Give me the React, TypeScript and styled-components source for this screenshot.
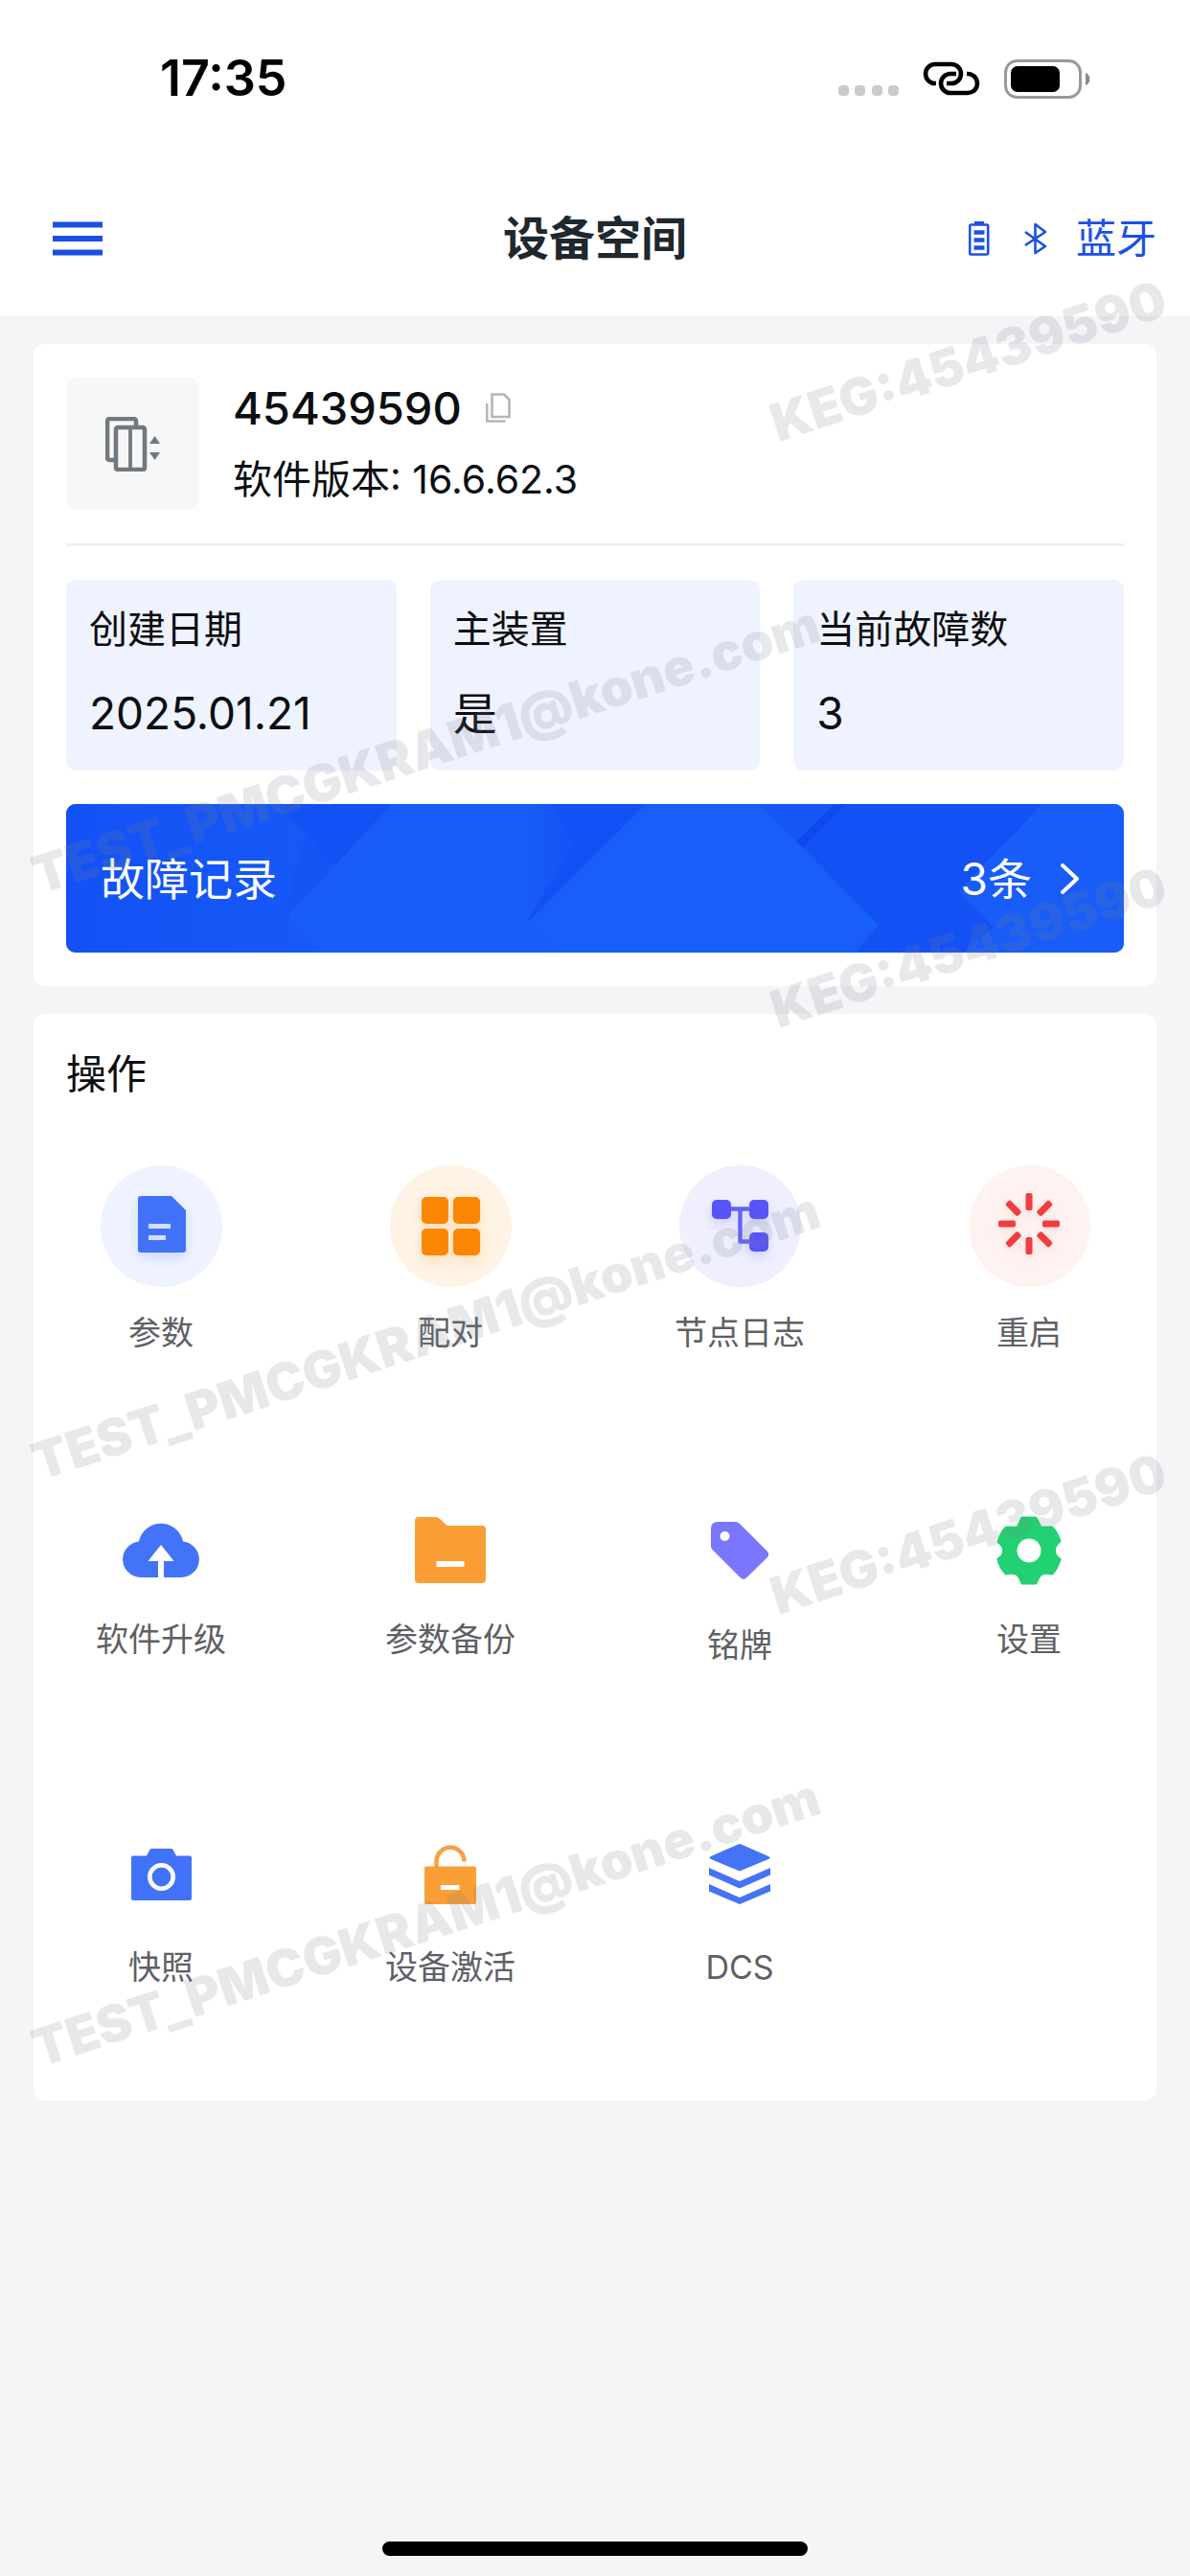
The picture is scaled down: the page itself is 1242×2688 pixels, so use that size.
// 库
import styled, { createGlobalStyle } from "styled-components";
import type { JSX } from "react";

// 类型
interface InfoInterface {
  label: string;
  value: string;
}

interface ActionInterface {
  name: string;
  icon: JSX.Element;
  labelGap: number;
  background?: string;
  shadow?: string;
}

// 数据
const infoList: InfoInterface[] = [
  { label: "创建日期", value: "2025.01.21" },
  { label: "主装置", value: "是" },
  { label: "当前故障数", value: "3" },
];

const watermarkRows = [0, 1, 2];

/**
 * @desc 顶部状态栏右侧的信号、热点和电量图标。
 */
function StatusIcons(): JSX.Element {
  return (
    <StatusIconsDiv>
      <svg width="63" height="38" viewBox="0 0 63 38" fill="#cbcbcb">
        <rect x="0" y="26" width="11" height="11" rx="4" />
        <rect x="17" y="26" width="11" height="11" rx="4" />
        <rect x="35" y="26" width="11" height="11" rx="4" />
        <rect x="52" y="26" width="11" height="11" rx="4" />
      </svg>
      <svg width="62" height="38" viewBox="0 0 62 38" fill="none" stroke="#000" strokeWidth="4.6">
        <path d="M15 24H14A10 10 0 0 1 14 4H31A10 10 0 0 1 31 24H26" />
        <path d="M36 14H30A10 10 0 0 0 30 34H48A10 10 0 0 0 48 14H47" />
      </svg>
      <svg width="90" height="41" viewBox="0 0 90 41">
        <rect x="1.5" y="1.5" width="78" height="38" rx="12" fill="none" stroke="#999" strokeWidth="3" />
        <rect x="7" y="7" width="51" height="27" rx="7" />
        <path d="M85 14a7 7 0 0 1 0 13z" fill="#8a8a8a" />
      </svg>
    </StatusIconsDiv>
  );
}

/** 电梯设备图标 */
function ElevatorIcon(): JSX.Element {
  return (
    <svg width="58" height="57" viewBox="0 0 58 57" fill="none" stroke="#71797e" strokeWidth="4.6">
      <path d="M9 45H4.5A2.5 2.5 0 0 1 2 42.5V4.5A2.5 2.5 0 0 1 4.5 2H29.5A2.5 2.5 0 0 1 32 4.5V9" />
      <rect x="11" y="11" width="30" height="44" rx="2" />
      <path d="M26 11V55" strokeWidth="3.8" />
      <path d="M46 28L51.5 20L57 28ZM46 37L51.5 45L57 37Z" fill="#71797e" stroke="none" />
    </svg>
  );
}

// 第一行图标以 127 的圆形底色为画布
const paramIcon = (
  <svg width="127" height="127" viewBox="0 0 127 127">
    <path d="M42 32H74L89 47V88a3 3 0 0 1-3 3H42a3 3 0 0 1-3-3V35a3 3 0 0 1 3-3z" fill="#4272f8" />
    <path d="M50 63.5H73M50 75.5H68" stroke="#d0deff" strokeWidth="5" />
  </svg>
);

const pairIcon = (
  <svg width="127" height="127" viewBox="0 0 127 127" fill="#fb8603">
    <rect x="33" y="33" width="28" height="28" rx="5" />
    <rect x="66" y="33" width="28" height="28" rx="5" />
    <rect x="33" y="66" width="28" height="28" rx="5" />
    <rect x="66" y="66" width="28" height="28" rx="5" />
  </svg>
);

const nodeIcon = (
  <svg width="127" height="127" viewBox="0 0 127 127" fill="#5754fa">
    <rect x="34" y="36" width="20" height="20" rx="5" />
    <rect x="73" y="36" width="20" height="20" rx="5" />
    <rect x="73" y="70" width="20" height="20" rx="5" />
    <path d="M54 45.5H74M63.5 45.5V79.5H74" fill="none" stroke="#6462f8" strokeWidth="4.4" strokeLinejoin="round" />
  </svg>
);

const restartIcon = (
  <svg width="127" height="127" viewBox="0 0 127 127" fill="#f03c40">
    {[0, 45, 90, 135, 180, 225, 270, 315].map((angle) => (
      <rect key={angle} x="59.5" y="29" width="7" height="18" rx="2" transform={`rotate(${angle} 63 61)`} />
    ))}
  </svg>
);

const upgradeIcon = (
  <svg width="80" height="57" viewBox="0 0 80 57">
    <path d="M19 57A18.8 18.8 0 0 1 17 19.5A23.5 23.5 0 0 1 63 19.5A18.8 18.8 0 0 1 61 57Z" fill="#4374f8" />
    <path d="M40 23L53.5 40H43V57H37V40H26.5Z" fill="#fff" />
  </svg>
);

const backupIcon = (
  <svg width="74" height="69" viewBox="0 0 74 69">
    <path
      d="M4 0H22Q24 0 25.5 1.5L34 9H70a4 4 0 0 1 4 4V65a4 4 0 0 1-4 4H4a4 4 0 0 1-4-4V4a4 4 0 0 1 4-4z"
      fill="#fa9f35"
    />
    <path d="M22.5 49H51.5" stroke="#fff" strokeWidth="6" />
  </svg>
);

const plateIcon = (
  <svg width="60" height="60" viewBox="0 0 60 60">
    <path
      d="M7 0H26Q28 0 29.5 1.5L59 31Q61.5 34 59 37L37 58.5Q34 61 31 58.5L1.5 29Q0 27.5 0 25.5V7Q0 0 7 0Z"
      fill="#7b77fc"
    />
    <circle cx="14.5" cy="15" r="5" fill="#fff" />
  </svg>
);

const settingIcon = (
  <svg width="70" height="72" viewBox="-1 0 70 72">
    <path
      d="M27 2H41L45 10Q47 13 51 12L58 12Q63 17 66 26Q60 31 60.5 36Q60 41 66 45Q63 55 58 60Q50 58 46 61Q43 64 41 70H27Q25 64 22 61Q18 58 10 60Q4 54 2 45Q8 41 7.5 36Q8 31 2 27Q5 17 10 12L17 12Q21 13 23 10Z"
      fill="#22d171"
      stroke="#22d171"
      strokeWidth="3"
      strokeLinejoin="round"
    />
    <circle cx="34" cy="36" r="12.5" fill="#fff" />
  </svg>
);

const snapshotIcon = (
  <svg width="63" height="54" viewBox="0 0 63 54">
    <path
      d="M2 7.5H16L19.5 1Q20 0 21.5 0H41.5Q43 0 43.5 1L47 7.5H61a2 2 0 0 1 2 2V52a2 2 0 0 1-2 2H2a2 2 0 0 1-2-2V9.5a2 2 0 0 1 2-2z"
      fill="#4272f8"
    />
    <circle cx="31.5" cy="29.5" r="12.2" fill="none" stroke="#fff" strokeWidth="4.6" />
  </svg>
);

const activeIcon = (
  <svg width="54" height="62" viewBox="0 0 54 62">
    <path d="M12.5 25V17A14.5 14.5 0 0 1 41.5 17.5" fill="none" stroke="#f5a145" strokeWidth="4.5" />
    <rect x="0" y="22.5" width="54" height="39.5" rx="2" fill="#fa9f35" />
    <path d="M17 44.5H36.5" stroke="#fff" strokeWidth="5" />
  </svg>
);

const dcsIcon = (
  <svg width="64" height="63" viewBox="0 0 64 63" fill="#4573f6">
    <path d="M30.5 0.5Q32 0 33.5 0.5L62 13Q65 14.5 62 16L32 28.5L2 16Q-1 14.5 2 13Z" />
    <path d="M0 25L32 39L64 25V32.5L32 46.5L0 32.5Z" />
    <path d="M0 42L32 56L64 42V49.5L32 63L0 49.5Z" />
  </svg>
);

const actionList: ActionInterface[] = [
  { name: "参数", icon: paramIcon, labelGap: 24, background: "#eff3ff", shadow: "#4272f833" },
  { name: "配对", icon: pairIcon, labelGap: 24, background: "#fef3e4", shadow: "#fb860333" },
  { name: "节点日志", icon: nodeIcon, labelGap: 24, background: "#efeffe", shadow: "#5754fa33" },
  { name: "重启", icon: restartIcon, labelGap: 24, background: "#fef3f1", shadow: "#f03c4022" },
  { name: "软件升级", icon: upgradeIcon, labelGap: 6 },
  { name: "参数备份", icon: backupIcon, labelGap: 6 },
  { name: "铭牌", icon: plateIcon, labelGap: 12 },
  { name: "设置", icon: settingIcon, labelGap: 6 },
  { name: "快照", icon: snapshotIcon, labelGap: 10 },
  { name: "设备激活", icon: activeIcon, labelGap: 10 },
  { name: "DCS", icon: dcsIcon, labelGap: 10 },
];

/**
 * @desc 设备空间页面。
 * @return {JSX.Element} 返回设备信息、故障记录和操作入口。
 */
function App(): JSX.Element {
  return (
    <PageDiv>
      <GlobalStyle />

      {/** 状态栏 */}
      <StatusBarDiv>
        <TimeSpan>17:35</TimeSpan>
        <StatusIcons />
      </StatusBarDiv>

      {/** 标题栏 */}
      <Header>
        <MenuButton aria-label="菜单">
          <svg width="52" height="36" viewBox="0 0 52 36" stroke="#1c50e4" strokeWidth="6">
            <path d="M0 3.5H52M0 18H52M0 32.5H52" />
          </svg>
        </MenuButton>
        <TitleH1>设备空间</TitleH1>
        <BluetoothButton>
          <BluetoothIconsSpan>
            <svg width="22" height="36" viewBox="0 0 22 36" fill="none" stroke="currentColor">
              <rect x="1.2" y="3.5" width="19" height="31" rx="1.5" strokeWidth="2.6" />
              <path d="M6 1.5H16" strokeWidth="3" />
              <path d="M5.5 11.5H16.5M5.5 19.5H16.5M5.5 27.5H16.5" strokeWidth="4.6" />
            </svg>
            <svg width="24" height="36" viewBox="0 0 24 36" fill="none" stroke="currentColor" strokeWidth="2.6">
              <path d="M1 11L22 26L11.5 33V3L22 11L1 25" strokeLinejoin="round" />
            </svg>
          </BluetoothIconsSpan>
          蓝牙
        </BluetoothButton>
      </Header>

      <Main>
        {/** 设备信息 */}
        <DeviceSection>
          <DeviceHeadDiv>
            <DeviceIconDiv>
              <ElevatorIcon />
            </DeviceIconDiv>
            <DeviceTextDiv>
              <DeviceNumberDiv>
                45439590
                <CopyButton aria-label="复制">
                  <svg width="26" height="31" viewBox="0 0 26 31" fill="none" stroke="#b4b5b9" strokeWidth="2.6">
                    <path d="M6.5 1.5H19L24.5 7V25H6.5Z" />
                    <path d="M1.2 11V29.5H20.5" />
                  </svg>
                </CopyButton>
              </DeviceNumberDiv>
              <VersionDiv>软件版本: 16.6.62.3</VersionDiv>
            </DeviceTextDiv>
          </DeviceHeadDiv>

          <DividerHr />

          <InfoDl>
            {infoList.map(({ label, value }) => (
              <InfoDiv key={label}>
                <dt>{label}</dt>
                <dd>{value}</dd>
              </InfoDiv>
            ))}
          </InfoDl>

          <RecordButton>
            <RecordSvg viewBox="0 0 1104 155" preserveAspectRatio="none" aria-hidden="true">
              <defs>
                <linearGradient id="recordLeft" x1="0" y1="0" x2="1" y2="0">
                  <stop offset="0" stopColor="#1451f5" />
                  <stop offset="1" stopColor="#165af7" />
                </linearGradient>
                <linearGradient id="recordFold" x1="0" y1="0" x2="1" y2="0">
                  <stop offset="0" stopColor="#185df9" />
                  <stop offset="1" stopColor="#1453f5" />
                </linearGradient>
              </defs>
              <path d="M0 0H1104V155H0Z" fill="#1451f5" />
              <path d="M0 0H220L280 64L231 116L266 155H0Z" fill="url(#recordLeft)" />
              <path d="M340 0H505L479 126L511 155H266L231 116L244 103Z" fill="#185df9" />
              <path d="M280 64L231 116Q232 88 250 33Z" fill="#1554f5" />
              <path d="M470 0H505L530 40L479 126Z" fill="url(#recordFold)" />
              <path d="M605 0H724L848 126L824 155H511L479 126Z" fill="#185ef9" />
              <path d="M724 0H806L763 39Z" fill="#1656f7" />
              <path d="M802 0H814L769 46L762 39Z" fill="#0f49ee" />
              <path d="M1019 0H1104V155H936L968 128L931 91Z" fill="#185df8" />
            </RecordSvg>
            <RecordNameSpan>故障记录</RecordNameSpan>
            <RecordCountSpan>
              3条
              <svg width="20" height="32" viewBox="0 0 20 32" fill="none" stroke="#fff" strokeWidth="4">
                <path d="M2 2L17 16L2 30" strokeLinejoin="round" strokeLinecap="round" />
              </svg>
            </RecordCountSpan>
          </RecordButton>
        </DeviceSection>

        {/** 操作入口 */}
        <ActionSection>
          <ActionH2>操作</ActionH2>
          <ActionGridDiv>
            {actionList.map(({ name, icon, labelGap, background, shadow }) => (
              <ActionButton key={name} $labelGap={labelGap}>
                <ActionIconDiv $background={background} $shadow={shadow}>
                  {icon}
                </ActionIconDiv>
                {name}
              </ActionButton>
            ))}
          </ActionGridDiv>
        </ActionSection>
      </Main>

      <HomeIndicatorDiv />

      {/** 水印层 */}
      <WatermarkDiv aria-hidden="true">
        {watermarkRows.map((row) => (
          <WatermarkRowDiv key={row}>
            <WatermarkSpan $left={814} $top={161}>
              KEG:45439590
            </WatermarkSpan>
            <WatermarkSpan $left={43} $top={633}>
              TEST_PMCGKRAM1@kone.com
            </WatermarkSpan>
          </WatermarkRowDiv>
        ))}
      </WatermarkDiv>
    </PageDiv>
  );
}

export default App;

const GlobalStyle = createGlobalStyle`
  * {
    box-sizing: border-box;
  }

  body {
    margin: 0;
    background: #f5f5f8;
    color: #0c0e12;
    font-family: Inter, "Noto Sans CJK SC", sans-serif;
    font-weight: 390;
  }

  button {
    padding: 0;
    border: none;
    background: none;
    color: inherit;
    font: inherit;
    cursor: pointer;
  }

  h1, h2, dl, dd {
    margin: 0;
    font-weight: inherit;
  }

  svg {
    display: block;
    flex-shrink: 0;
  }
`;

const PageDiv = styled.div`
  position: relative;
  display: flex;
  flex-direction: column;
  min-height: 100vh;
  overflow: hidden;
`;

const StatusBarDiv = styled.div`
  display: flex;
  align-items: center;
  justify-content: space-between;
  height: 164px;
  padding: 0 104px 0 167px;
  background: #fff;
`;

const TimeSpan = styled.span`
  color: #000;
  font-size: 52px;
  font-weight: 600;
  line-height: 60px;
`;

const StatusIconsDiv = styled.div`
  display: flex;
  align-items: center;
  gap: 24px;
`;

const Header = styled.header`
  display: grid;
  grid-template-columns: 1fr auto 1fr;
  align-items: center;
  height: 166px;
  padding: 4px 35px 0;
  background: #fff;
`;

const MenuButton = styled.button`
  justify-self: start;
  padding: 20px;
`;

const TitleH1 = styled.h1`
  color: #20282e;
  font-size: 48px;
  font-weight: 700;
  line-height: 60px;
`;

const BluetoothButton = styled.button`
  display: flex;
  align-items: center;
  justify-self: end;
  gap: 30px;
  color: #1c50e4;
  font-size: 42px;
  line-height: 56px;
`;

const BluetoothIconsSpan = styled.span`
  display: flex;
  gap: 36px;
`;

const Main = styled.main`
  display: flex;
  flex-direction: column;
  gap: 29px;
  padding: 29px 35px;
`;

const DeviceSection = styled.section`
  display: flex;
  flex-direction: column;
  gap: 35px;
  padding: 35px 34px;
  border-radius: 12px;
  background: #fff;
`;

const DeviceHeadDiv = styled.div`
  display: flex;
  align-items: center;
  gap: 35px;
`;

const DeviceIconDiv = styled.div`
  display: flex;
  align-items: center;
  justify-content: center;
  width: 139px;
  height: 138px;
  border-radius: 10px;
  background: #f7f7f8;
`;

const DeviceTextDiv = styled.div`
  display: flex;
  flex-direction: column;
  gap: 16px;
  padding-bottom: 3px;
`;

const DeviceNumberDiv = styled.div`
  display: flex;
  align-items: center;
  gap: 25px;
  font-size: 47px;
  font-weight: 500;
  line-height: 60px;
`;

const CopyButton = styled.button`
  display: flex;
`;

const VersionDiv = styled.div`
  font-size: 41px;
  line-height: 56px;
`;

const DividerHr = styled.hr`
  width: 100%;
  height: 3px;
  margin: 0;
  border: none;
  background: #f0f0f2;
`;

const InfoDl = styled.dl`
  display: grid;
  grid-template-columns: repeat(3, 1fr);
  gap: 35px;
`;

const InfoDiv = styled.div`
  display: flex;
  flex-direction: column;
  gap: 29px;
  padding: 24px 24px 30px;
  border-radius: 10px;
  background: #eff3ff;
  font-size: 40px;
  line-height: 56px;

  dd {
    font-size: 46px;
    line-height: 60px;
  }
`;

const RecordButton = styled.button`
  position: relative;
  display: flex;
  align-items: center;
  justify-content: space-between;
  height: 155px;
  padding: 0 46px 0 36px;
  border-radius: 10px;
  overflow: hidden;
  color: #fff;
  font-size: 46px;
  line-height: 60px;
`;

const RecordSvg = styled.svg`
  position: absolute;
  inset: 0;
  width: 100%;
  height: 100%;
`;

const RecordNameSpan = styled.span`
  position: relative;
`;

const RecordCountSpan = styled.span`
  position: relative;
  display: flex;
  align-items: center;
  gap: 30px;
`;

const ActionSection = styled.section`
  padding: 35px 34px 100px;
  border-radius: 12px;
  background: #fff;
`;

const ActionH2 = styled.h2`
  margin-bottom: 67px;
  font-size: 42px;
  line-height: 56px;
`;

const ActionGridDiv = styled.div`
  display: grid;
  grid-template-columns: repeat(4, 198px);
  justify-content: space-between;
  row-gap: 138px;
`;

const ActionButton = styled.button<{ $labelGap: number }>`
  display: flex;
  flex-direction: column;
  align-items: center;
  gap: ${({ $labelGap }) => $labelGap}px;
  min-height: 200px;
  color: #5e6064;
  font-size: 34px;
  line-height: 48px;
`;

const ActionIconDiv = styled.div<{ $background?: string; $shadow?: string }>`
  display: flex;
  align-items: center;
  justify-content: center;
  width: 127px;
  height: 127px;
  border-radius: 50%;
  background: ${({ $background }) => $background ?? "transparent"};

  svg {
    filter: ${({ $shadow }) => ($shadow ? `drop-shadow(0 5px 6px ${$shadow})` : "none")};
  }
`;

const HomeIndicatorDiv = styled.div`
  width: 444px;
  height: 15px;
  margin: auto auto 21px;
  border-radius: 8px;
  background: #000;
`;

const WatermarkDiv = styled.div`
  position: absolute;
  top: 256px;
  left: 0;
  pointer-events: none;
`;

const WatermarkRowDiv = styled.div`
  position: relative;
  height: 612px;
`;

const WatermarkSpan = styled.span<{ $left: number; $top: number }>`
  position: absolute;
  top: ${({ $top }) => $top}px;
  left: ${({ $left }) => $left}px;
  color: rgba(122, 130, 136, 0.18);
  font-size: 54px;
  font-weight: 900;
  line-height: 50px;
  white-space: nowrap;
  transform: rotate(-18deg);
  transform-origin: 0 100%;
`;
